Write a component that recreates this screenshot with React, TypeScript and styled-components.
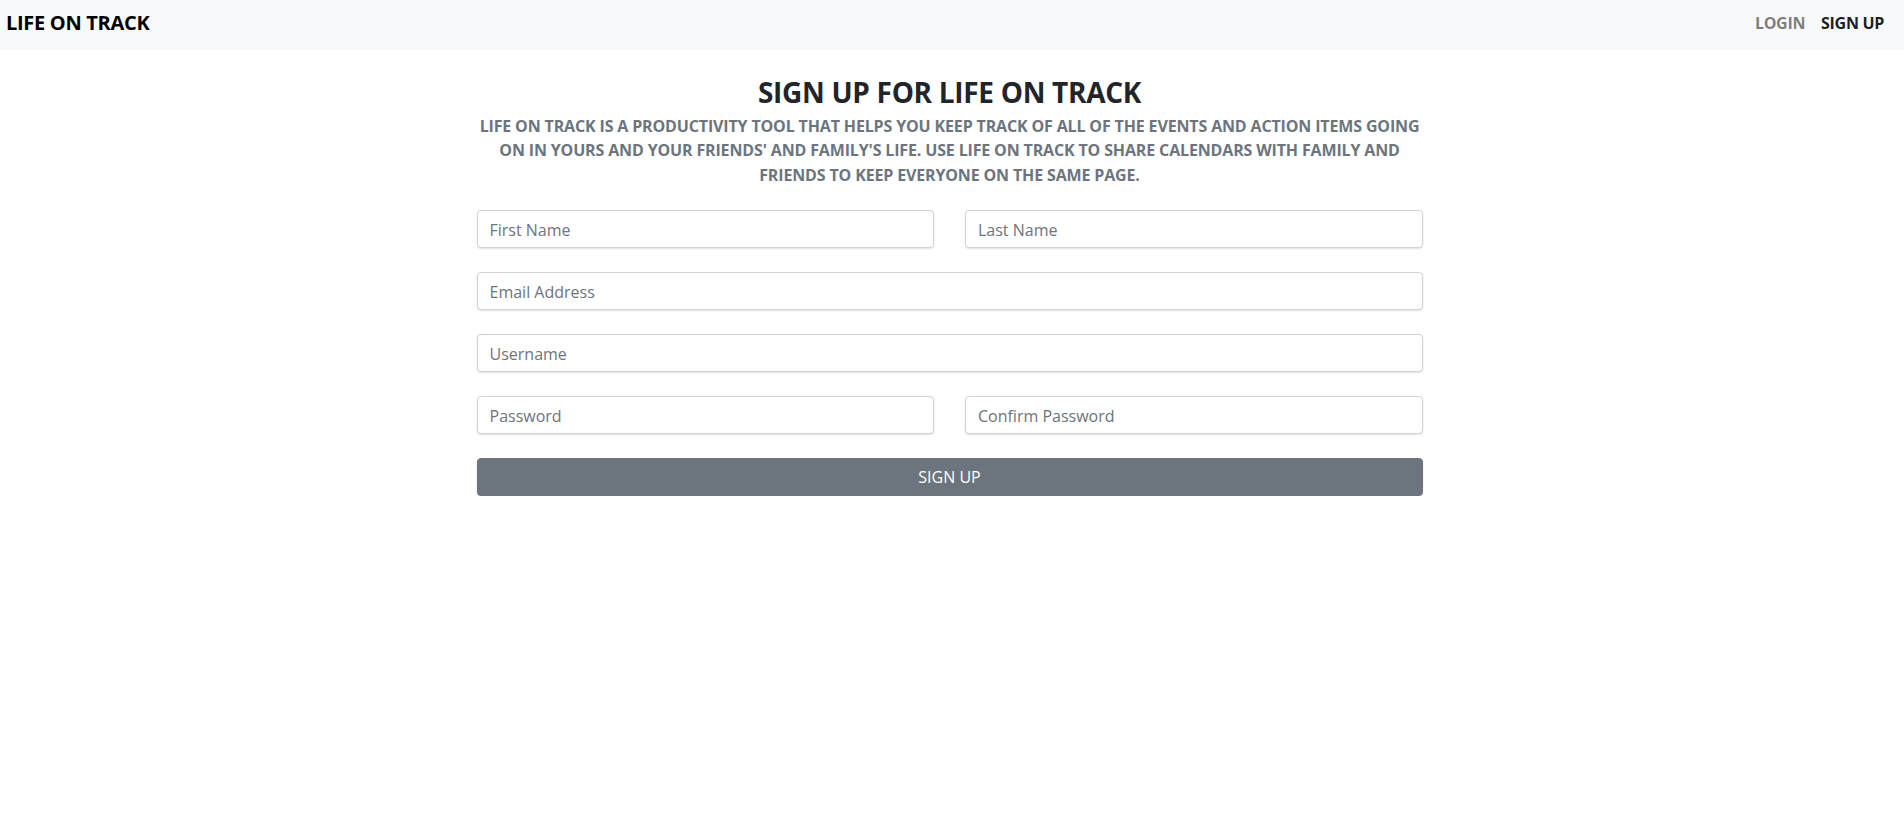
import React from "react";
import styled, { createGlobalStyle } from "styled-components";

const Global = createGlobalStyle`
  html, body { margin: 0; padding: 0; background: #fff; }
  body {
    font-family: "Open Sans", "Noto Sans", "Liberation Sans", sans-serif;
    color: #212529;
  }
  * { box-sizing: border-box; }
`;

const NavBar = styled.nav`
  height: 50px;
  background: #f8f9fa;
  display: flex;
  align-items: center;
  justify-content: space-between;
  padding: 0 20px 5px 6px;
`;

const Brand = styled.a`
  font-size: 20px;
  font-weight: 700;
  color: #000;
  text-decoration: none;
  letter-spacing: -0.3px;
`;

const NavLinks = styled.div`
  display: flex;
  align-items: center;
  gap: 16px;
`;

const NavLink = styled.a<{ $active?: boolean }>`
  font-size: 16px;
  font-weight: 700;
  text-decoration: none;
  letter-spacing: -0.3px;
  color: ${(p) => (p.$active ? "rgba(0,0,0,0.9)" : "rgba(0,0,0,0.5)")};
`;

const Page = styled.div`
  display: flex;
  justify-content: center;
  padding-right: 5px;
`;

const Main = styled.main`
  width: 946px;
  padding-top: 25px;
  display: flex;
  flex-direction: column;
`;

const Title = styled.h1`
  margin: 0;
  font-size: 28px;
  line-height: 34px;
  font-weight: 700;
  text-align: center;
  color: #212529;
  letter-spacing: -0.3px;
`;

const Lead = styled.p`
  margin: 5px 0 0;
  font-size: 16px;
  line-height: 24.3px;
  font-weight: 700;
  text-align: center;
  color: #6c757d;
  letter-spacing: -0.15px;
`;

const Form = styled.form`
  margin-top: 23px;
  display: flex;
  flex-direction: column;
  gap: 24px;
`;

const Row = styled.div<{ $cols: number }>`
  display: grid;
  grid-template-columns: repeat(${(p) => p.$cols}, 1fr);
  column-gap: 31px;
`;

const Input = styled.input`
  height: 38px;
  width: 100%;
  padding: 7px 12px 5px;
  font-family: inherit;
  font-size: 16px;
  color: #495057;
  background: #fff;
  border: 1px solid #ced4da;
  border-radius: 4px;
  box-shadow: 0 1px 2px rgba(0, 0, 0, 0.12);
  outline: none;
  &::placeholder { color: #6c757d; }
`;

const Button = styled.button`
  height: 38px;
  width: 100%;
  border: 1px solid #6c757d;
  border-radius: 4px;
  background: #6c757d;
  color: #fff;
  font-family: inherit;
  font-size: 16px;
  box-shadow: 0 1px 2px rgba(0, 0, 0, 0.15);
  cursor: pointer;
`;

export default function App() {
  return (
    <>
      <Global />
      <NavBar>
        <Brand href="#">LIFE ON TRACK</Brand>
        <NavLinks>
          <NavLink href="#">LOGIN</NavLink>
          <NavLink href="#" $active>SIGN UP</NavLink>
        </NavLinks>
      </NavBar>
      <Page>
        <Main>
          <Title>SIGN UP FOR LIFE ON TRACK</Title>
          <Lead>
            LIFE ON TRACK IS A PRODUCTIVITY TOOL THAT HELPS YOU KEEP TRACK OF ALL OF THE EVENTS AND ACTION ITEMS GOING
            <br />
            ON IN YOURS AND YOUR FRIENDS' AND FAMILY'S LIFE. USE LIFE ON TRACK TO SHARE CALENDARS WITH FAMILY AND
            <br />
            FRIENDS TO KEEP EVERYONE ON THE SAME PAGE.
          </Lead>
          <Form onSubmit={(e) => e.preventDefault()}>
            <Row $cols={2}>
              <Input placeholder="First Name" />
              <Input placeholder="Last Name" />
            </Row>
            <Row $cols={1}>
              <Input placeholder="Email Address" />
            </Row>
            <Row $cols={1}>
              <Input placeholder="Username" />
            </Row>
            <Row $cols={2}>
              <Input type="password" placeholder="Password" />
              <Input type="password" placeholder="Confirm Password" />
            </Row>
            <Button type="submit">SIGN UP</Button>
          </Form>
        </Main>
      </Page>
    </>
  );
}
